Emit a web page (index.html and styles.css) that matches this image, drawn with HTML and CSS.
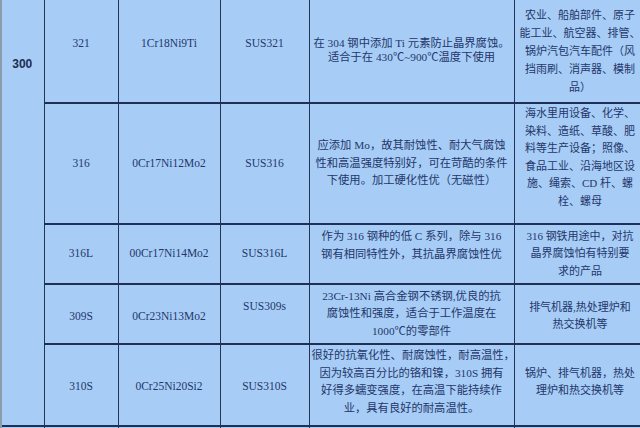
FILE: index.html
```html
<!DOCTYPE html>
<html lang="zh-CN">
<head>
<meta charset="utf-8">
<title>300 系列不锈钢</title>
<link rel="stylesheet" href="styles.css">
</head>
<body>
<div class="sheet">
<table class="spec">
  <colgroup>
    <col class="c-series"><col class="c-grade"><col class="c-cn"><col class="c-jis"><col class="c-desc"><col class="c-use">
  </colgroup>
  <tbody>
    <tr class="r1">
      <td class="series" rowspan="5"><span>300</span></td>
      <td class="code lift">321</td>
      <td class="code lift">1Cr18Ni9Ti</td>
      <td class="code lift">SUS321</td>
      <td class="desc tight">在 304 钢中添加 Ti 元素防止晶界腐蚀。<br>适合于在 430℃~900℃温度下使用</td>
      <td class="use loose">农业、船舶部件、原子<br>能工业、航空器、排管、<br>锅炉汽包汽车配件（风<br>挡雨刷、消声器、模制<br>品）</td>
    </tr>
    <tr class="r2">
      <td class="code">316</td>
      <td class="code">0Cr17Ni12Mo2</td>
      <td class="code">SUS316</td>
      <td class="desc">应添加 Mo，故其耐蚀性、耐大气腐蚀<br>性和高温强度特别好，可在苛酷的条件<br>下使用。加工硬化性优（无磁性）</td>
      <td class="use lift-more">海水里用设备、化学、<br>染料、造纸、草酸、肥<br>料等生产设备；照像、<br>食品工业、沿海地区设<br>施、绳索、CD 杆、螺<br>栓、螺母</td>
    </tr>
    <tr class="r3">
      <td class="code">316L</td>
      <td class="code">00Cr17Ni14Mo2</td>
      <td class="code">SUS316L</td>
      <td class="desc top">作为 316 钢种的低 C 系列，除与 316<br>钢有相同特性外，其抗晶界腐蚀性优</td>
      <td class="use">316 钢铁用途中，对抗<br>晶界腐蚀怕有特别要<br>求的产品</td>
    </tr>
    <tr class="r4">
      <td class="code drop">309S</td>
      <td class="code drop">0Cr23Ni13Mo2</td>
      <td class="code lift">SUS309s</td>
      <td class="desc">23Cr-13Ni 高合金钢不锈钢,优良的抗<br>腐蚀性和强度，适合于工作温度在<br>1000℃的零部件</td>
      <td class="use drop-less">排气机器,热处理炉和<br>热交换机等</td>
    </tr>
    <tr class="r5">
      <td class="code drop-less">310S</td>
      <td class="code drop-less">0Cr25Ni20Si2</td>
      <td class="code drop-less">SUS310S</td>
      <td class="desc lift-less">很好的抗氧化性、耐腐蚀性，耐高温性，<br>因为较高百分比的铬和镍，310S 拥有<br>好得多蠕变强度，在高温下能持续作<br>业，具有良好的耐高温性。</td>
      <td class="use lift-less">锅炉、排气机器，热处<br>理炉和热交换机等</td>
    </tr>
    <tr class="r6">
      <td class="series"></td><td></td><td></td><td></td><td></td><td></td>
    </tr>
  </tbody>
</table>
</div>
</body>
</html>
```
FILE: styles.css
```css
html, body {
  margin: 0;
  padding: 0;
  background: #a7cdf6;
}
body {
  width: 640px;
  height: 428px;
  overflow: hidden;
}
.sheet {
  width: 640px;
  height: 428px;
  overflow: hidden;
  border-left: 2px solid #8a9daa;
  box-sizing: border-box;
}
.spec {
  border-collapse: collapse;
  table-layout: fixed;
  width: 645px;
  margin-left: -1px;
  font-family: "Liberation Serif", "Noto Sans CJK SC", serif;
  font-size: 11px;
  line-height: 17.5px;
  color: #24366a;
  background: #a7cdf6;
}
.c-series { width: 43px; }
.c-grade { width: 74px; }
.c-cn { width: 102px; }
.c-jis { width: 89px; }
.c-desc { width: 205px; }
.c-use { width: 132px; }

.spec td {
  border-left: 1px solid #243457;
  border-right: 1px solid #243457;
  border-top: 2px solid #1f2f58;
  border-bottom: 2px solid #1f2f58;
  padding: 0 2px;
  text-align: center;
  vertical-align: middle;
  white-space: nowrap;
  overflow: hidden;
}
.spec td.series {
  border-left: none;
  vertical-align: top;
  padding-top: 57px;
  font-family: "Liberation Sans", Arial, sans-serif;
  font-weight: bold;
  font-size: 12px;
  line-height: 14px;
  color: #1c2c55;
}
.r1 td { border-top: none; }
.r1 { height: 103px; }
.r2 { height: 121px; }
.r3 { height: 60px; }
.r4 { height: 60px; }
.r5 { height: 82px; }
.r6 { height: 10px; }

.code { font-size: 11.5px; }
.desc { font-size: 11.3px; }
.use { font-size: 11px; }

.lift { padding-bottom: 15px !important; }
.lift-more { padding-bottom: 12px !important; }
.lift-less { padding-bottom: 6px !important; }
.drop { padding-top: 6px !important; }
.drop-less { padding-top: 4px !important; }
.tight { line-height: 14px; padding-bottom: 2px !important; }
.loose { line-height: 18px; }
.spec td.top { vertical-align: top; padding-top: 3px; }
```
